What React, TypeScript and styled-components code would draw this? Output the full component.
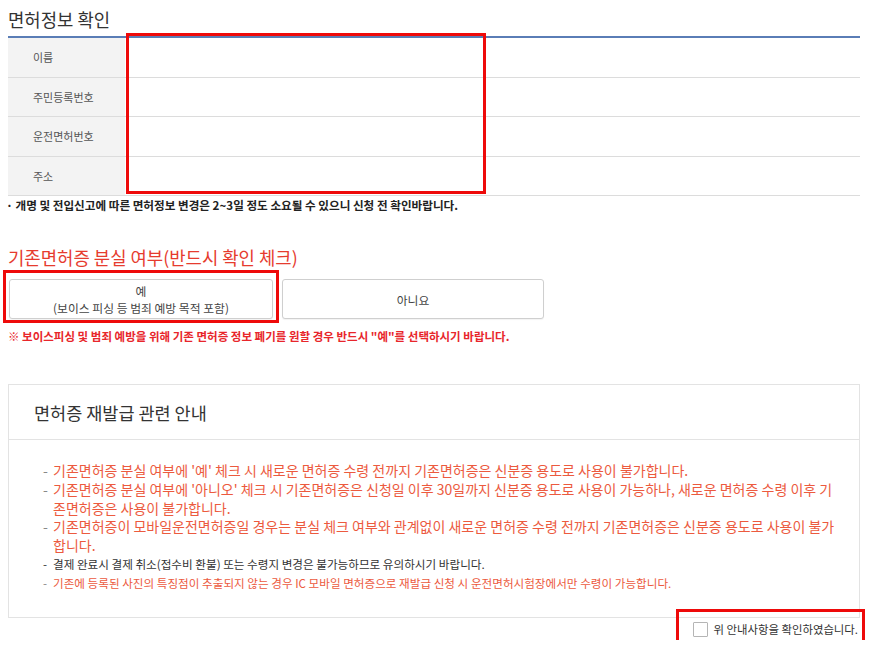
import React from "react"
import styled, { createGlobalStyle } from "styled-components"

const GlobalStyle = createGlobalStyle`
	body {
		margin: 0;
		background: #fff;
		font-family: "Noto Sans CJK KR", "Noto Sans", sans-serif;
		color: #333;
	}
`

const infoRows = ["이름", "주민등록번호", "운전면허번호", "주소"]

const notices = [
	{
		text: "기존면허증 분실 여부에 '예' 체크 시 새로운 면허증 수령 전까지 기존면허증은 신분증 용도로 사용이 불가합니다.",
		tone: "red",
	},
	{
		text: "기존면허증 분실 여부에 '아니오' 체크 시 기존면허증은 신청일 이후 30일까지 신분증 용도로 사용이 가능하나, 새로운 면허증 수령 이후 기존면허증은 사용이 불가합니다.",
		tone: "red",
	},
	{
		text: "기존면허증이 모바일운전면허증일 경우는 분실 체크 여부와 관계없이 새로운 면허증 수령 전까지 기존면허증은 신분증 용도로 사용이 불가합니다.",
		tone: "red",
	},
	{
		text: "결제 완료시 결제 취소(접수비 환불) 또는 수령지 변경은 불가능하므로 유의하시기 바랍니다.",
		tone: "dark",
		small: true,
	},
	{
		text: "기존에 등록된 사진의 특징점이 추출되지 않는 경우 IC 모바일 면허증으로 재발급 신청 시 운전면허시험장에서만 수령이 가능합니다.",
		tone: "red",
		small: true,
	},
]

const App = () => {
	return (
		<Page>
			<GlobalStyle />
			<SectionTitle>면허정보 확인</SectionTitle>
			<TableWrap>
				<InfoTable>
					{infoRows.map((label) => (
						<InfoRow key={label}>
							<LabelCell>{label}</LabelCell>
							<ValueCell />
						</InfoRow>
					))}
				</InfoTable>
				<Highlight $left={118} $top={-3} $width={360} $height={161} />
			</TableWrap>
			<InfoNote>· 개명 및 전입신고에 따른 면허정보 변경은 2~3일 정도 소요될 수 있으니 신청 전 확인바랍니다.</InfoNote>

			<RedTitle>기존면허증 분실 여부(반드시 확인 체크)</RedTitle>
			<ChoiceRow>
				<ChoiceWrap>
					<ChoiceButton>
						<span>예</span>
						<span>(보이스 피싱 등 범죄 예방 목적 포함)</span>
					</ChoiceButton>
					<Highlight $left={-6} $top={-9} $width={276} $height={53} />
				</ChoiceWrap>
				<ChoiceButton>아니요</ChoiceButton>
			</ChoiceRow>
			<WarnNote>※ 보이스피싱 및 범죄 예방을 위해 기존 면허증 정보 폐기를 원할 경우 반드시 "예"를 선택하시기 바랍니다.</WarnNote>

			<Panel>
				<PanelHeader>면허증 재발급 관련 안내</PanelHeader>
				<NoticeList>
					{notices.map((n) => (
						<NoticeItem key={n.text} $tone={n.tone} $small={n.small}>
							<Dash $tone={n.tone}>-</Dash>
							<span>{n.text}</span>
						</NoticeItem>
					))}
				</NoticeList>
			</Panel>

			<AgreeRow>
				<AgreeLabel>
					<CheckBox type="checkbox" />
					위 안내사항을 확인하였습니다.
					<Highlight $left={-17} $top={-10} $width={189} $height={36} />
				</AgreeLabel>
			</AgreeRow>
		</Page>
	)
}

export default App

const Page = styled.div`
	width: 852px;
	padding: 0 10px 0 8px;
`

const SectionTitle = styled.h2`
	margin: 8px 0 6px;
	font-size: 17.8px;
	line-height: 22px;
	font-weight: 400;
	color: #333;
`

const TableWrap = styled.div`
	position: relative;
`

const InfoTable = styled.div`
	border-top: 2px solid #5a7db6;
`

const InfoRow = styled.div`
	display: grid;
	grid-template-columns: 117px 1fr;
	height: 38.5px;
	border-bottom: 1px solid #dcdcdc;
`

const LabelCell = styled.div`
	display: flex;
	align-items: center;
	padding-left: 25px;
	background: #f3f3f3;
	font-size: 11px;
	color: #555;
`

const ValueCell = styled.div`
	background: #fff;
`

const Highlight = styled.div<{ $left: number; $top: number; $width: number; $height: number }>`
	position: absolute;
	left: ${(p) => p.$left}px;
	top: ${(p) => p.$top}px;
	width: ${(p) => p.$width}px;
	height: ${(p) => p.$height}px;
	box-sizing: border-box;
	border: 3px solid #ee0a0a;
	pointer-events: none;
`

const InfoNote = styled.p`
	margin: 1px 0 0 -2px;
	font-size: 11.6px;
	line-height: 16px;
	font-weight: 700;
	color: #222;
`

const RedTitle = styled.h3`
	margin: 33px 0 0;
	font-size: 17.8px;
	line-height: 22px;
	font-weight: 400;
	color: #e63b2e;
`

const ChoiceRow = styled.div`
	display: grid;
	grid-template-columns: 264px 262px;
	gap: 9px;
	margin: 11px 0 0 1px;
`

const ChoiceWrap = styled.div`
	position: relative;
	display: flex;
`

const ChoiceButton = styled.button`
	flex: 1;
	height: 40px;
	display: flex;
	flex-direction: column;
	align-items: center;
	justify-content: center;
	gap: 2px;
	background: #fff;
	border: 1px solid #cfcfcf;
	border-radius: 3px;
	box-shadow: 0 1px 1px rgba(0, 0, 0, 0.05);
	font-family: inherit;
	font-size: 11.8px;
	line-height: 15px;
	color: #444;
	padding: 0;
`

const WarnNote = styled.p`
	margin: 9px 0 0;
	font-size: 11.5px;
	line-height: 16px;
	font-weight: 700;
	color: #e8262b;
`

const Panel = styled.section`
	margin-top: 40px;
	border: 1px solid #e3e3e3;
`

const PanelHeader = styled.div`
	height: 54px;
	display: flex;
	align-items: center;
	padding-left: 25px;
	border-bottom: 1px solid #e3e3e3;
	font-size: 17.5px;
	color: #333;
`

const NoticeList = styled.ul`
	list-style: none;
	margin: 0;
	padding: 21px 22px 24px 34px;
`

const NoticeItem = styled.li<{ $tone: string; $small?: boolean }>`
	display: flex;
	font-size: ${(p) => (p.$small ? "11.6px" : "14px")};
	line-height: 18.8px;
	color: ${(p) => (p.$tone === "red" ? "#ec5a3e" : "#333")};
	word-break: break-all;
`

const Dash = styled.span<{ $tone: string }>`
	flex: 0 0 10px;
	color: ${(p) => (p.$tone === "red" ? "#888" : "#333")};
`

const AgreeRow = styled.div`
	display: flex;
	justify-content: flex-end;
	margin-top: 1px;
	padding-right: 2px;
`

const AgreeLabel = styled.label`
	position: relative;
	display: flex;
	align-items: center;
	gap: 5px;
	height: 21px;
	font-size: 11.4px;
	color: #333;
`

const CheckBox = styled.input`
	appearance: none;
	width: 15px;
	height: 15px;
	margin: 0;
	border: 1px solid #b5b5b5;
	border-radius: 1px;
	background: #fff;
`
